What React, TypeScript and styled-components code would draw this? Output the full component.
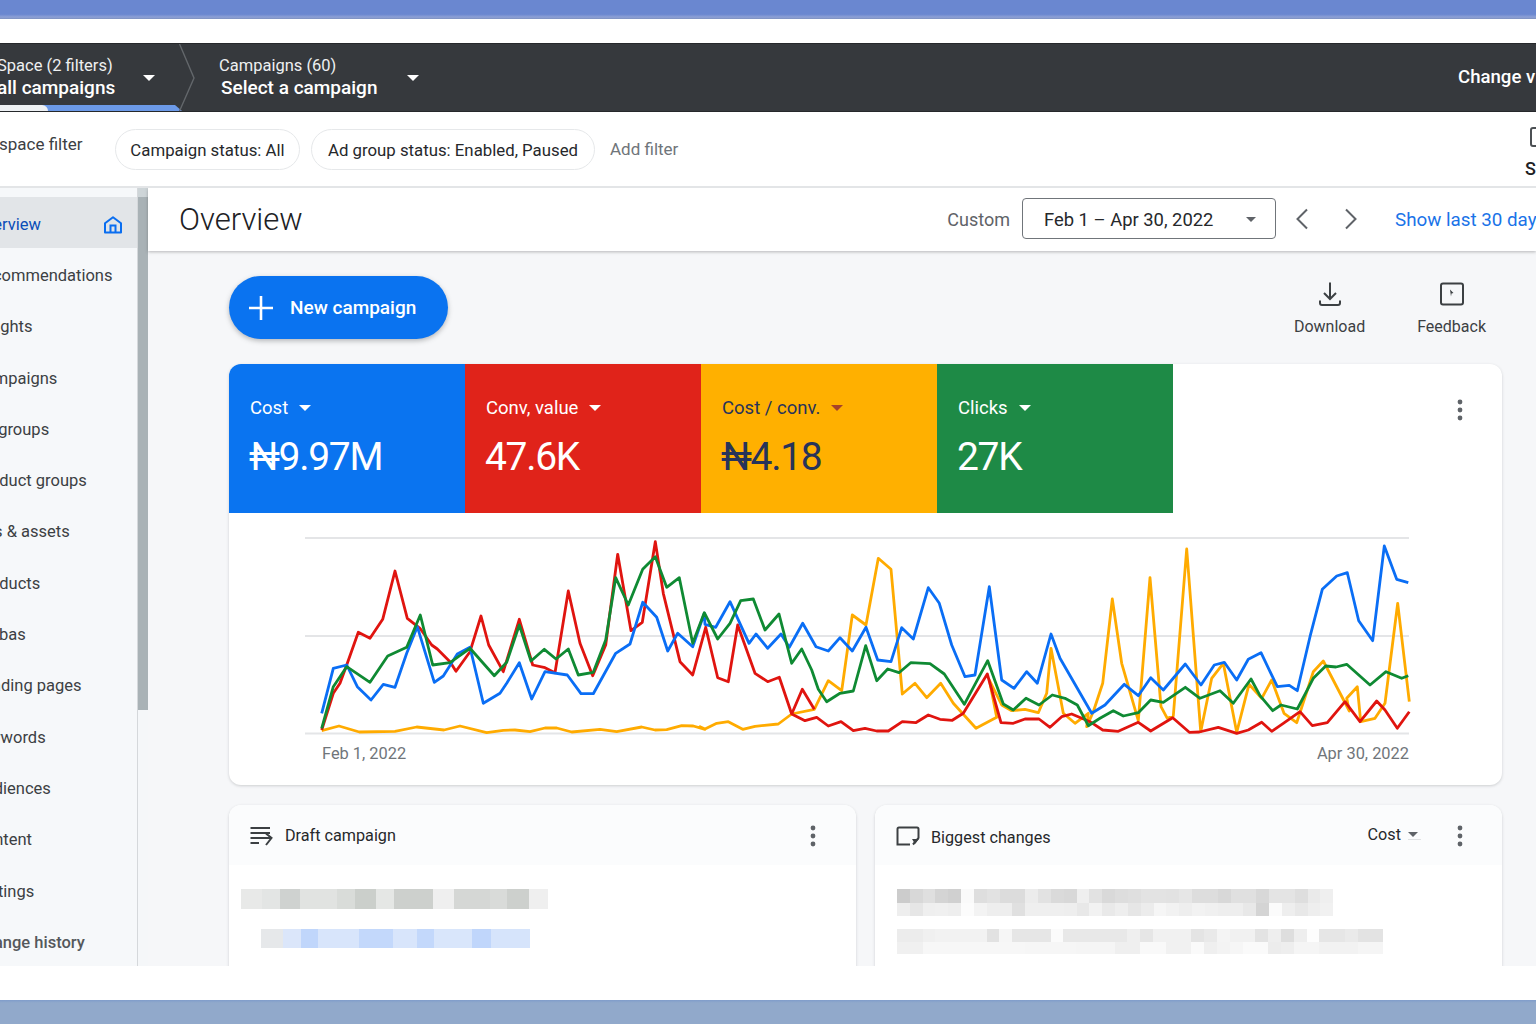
import React from 'react';
import styled, { createGlobalStyle } from 'styled-components';

const Global = createGlobalStyle`
  html, body { margin: 0; padding: 0; background: #fff; overflow: hidden; }
  * { box-sizing: border-box; }
  body { font-family: Roboto, "Noto Sans", "Liberation Sans", sans-serif; color: #202124; }
`;

const Page = styled.div`
  width: 1536px; height: 1024px; overflow: hidden; display: flex; flex-direction: column; background: #fff;
`;
const TopBand = styled.div`
  height: 19px; flex: none; margin-bottom: 24px;
  background: linear-gradient(#6a87d0 0, #6a87d0 75%, #8ea1d6 90%, #7d90bf 100%);
`;
const Stage = styled.div`
  width: 1566px; margin-left: -30px; height: 923px; flex: none; display: flex; flex-direction: column; overflow: hidden;
`;
const BottomBand = styled.div`
  margin-top: 34px; height: 24px; flex: none;
  background: linear-gradient(#7f9ccb 0, #91a9cb 12%, #91a9cb 100%);
`;

const DarkBar = styled.div`
  height: 69px; flex: none; display: flex; align-items: center; color: #fff;
  background: #36393d; border-top: 1px solid #26282b; border-bottom: 1px solid #26282b;
`;
const Crumb = styled.div<{ $w: number; $pad: number }>`
  position: relative; height: 100%; width: ${p => p.$w}px; padding-left: ${p => p.$pad}px; flex: none;
  display: flex; align-items: center;
`;
const CrumbText = styled.div<{ $w: number }>`
  width: ${p => p.$w}px; display: flex; flex-direction: column; flex: none; padding-bottom: 2px;
`;
const CrumbSmall = styled.span`
  font-size: 16.5px; line-height: 22px; color: #eef0f1; white-space: nowrap;
`;
const CrumbBold = styled.span<{ $indent?: number }>`
  font-size: 19px; line-height: 22px; font-weight: 500; white-space: nowrap; padding-left: ${p => p.$indent ?? 0}px;
`;
const Caret = styled.span<{ $c?: string; $s?: number }>`
  display: inline-block; flex: none; width: 0; height: 0;
  border-left: ${p => p.$s ?? 6.5}px solid transparent; border-right: ${p => p.$s ?? 6.5}px solid transparent;
  border-top: ${p => p.$s ?? 6.5}px solid ${p => p.$c ?? '#fff'};
`;
const CrumbChevron = styled.svg`
  position: absolute; right: -15px; top: 0; width: 16px; height: 67px;
`;
const ActiveTab = styled.div`
  position: absolute; left: 0; bottom: 0; width: 212px; height: 6px; background: #6c9ae8;
  clip-path: polygon(0 0, 205px 0, 212px 100%, 0 100%);
`;
const ActiveTabLight = styled.div`
  position: absolute; left: 0; bottom: 0; width: 78px; height: 6px; background: #eef1f4; border-top-right-radius: 6px;
`;
const ChangeView = styled.div`
  margin-left: auto; width: 78px; flex: none; white-space: nowrap; font-size: 18.6px; font-weight: 500; margin-top: -1px;
`;

const FilterBar = styled.div`
  height: 76px; flex: none; background: #fff; border-bottom: 2px solid #e3e5e7;
  display: flex; align-items: flex-start; padding-top: 17px;
`;
const FilterLabel = styled.div`
  width: 145px; flex: none; font-size: 17px; line-height: 30px; color: #3c4043; white-space: nowrap;
  padding-left: 29px; margin-top: 0;
`;
const Chip = styled.div<{ $w: number }>`
  width: ${p => p.$w}px; height: 41px; flex: none; border: 1.5px solid #e6e8ea; border-radius: 21px;
  display: flex; align-items: center; justify-content: center; font-size: 16.8px; white-space: nowrap; margin-right: 11px;
  color: #26282b;
`;
const AddFilter = styled.div`
  font-size: 17px; line-height: 41px; color: #70757a; margin-left: 4px; white-space: nowrap;
`;
const SideTool = styled.div`
  margin-left: auto; width: 11px; flex: none; display: flex; flex-direction: column; align-items: flex-start;
  margin-top: -2px;
`;
const SideToolBox = styled.div`
  width: 18px; height: 20px; margin-left: 5px; border: 2px solid #4c5054; border-radius: 3px; flex: none;
`;
const SideToolLabel = styled.div`
  font-size: 18px; line-height: 22px; margin-top: 11px; white-space: nowrap; font-weight: 500;
`;

const Body = styled.div`
  flex: 1; min-height: 0; display: flex; overflow: hidden;
`;
const Sidebar = styled.nav`
  width: 168px; flex: none; background: #f6f8fa; border-right: 1px solid #d5d8db; padding-top: 9px;
  display: flex; flex-direction: column;
`;
const NavItem = styled.div<{ $active?: boolean; $pad?: number; $strong?: boolean }>`
  height: 51.3px; flex: none; display: flex; align-items: center; padding-left: ${p => p.$pad ?? 4}px; padding-right: 14px;
  font-size: 16.5px; white-space: nowrap; justify-content: space-between;
  padding-top: ${p => (p.$active ? 4 : 3)}px;
  font-weight: ${p => (p.$strong ? 500 : 400)};
  background: ${p => (p.$active ? '#e2e5e8' : 'transparent')};
  color: ${p => (p.$active ? '#0b4db8' : p.$strong ? '#55585c' : '#3c4043')};
`;
const ScrollTrack = styled.div`
  width: 10px; flex: none; background: #f5f7f9; display: flex; flex-direction: column;
`;
const ScrollThumb = styled.div`
  height: 522px; flex: none; background: linear-gradient(#ced5d8 0, #ced5d8 9px, #a9b2b6 9px, #a9b2b6 100%);
`;
const Main = styled.main`
  flex: 1; min-width: 0; background: #f6f7f9; display: flex; flex-direction: column;
`;
const HeaderBar = styled.header`
  height: 63px; flex: none; background: #fff; display: flex; align-items: center; padding-left: 31px;
  box-shadow: 0 1px 3px rgba(60, 64, 67, 0.35); position: relative;
`;
const Title = styled.h1`
  flex: 1; margin: 0; font-size: 31px; font-weight: 300; color: #202124;
`;
const RangeLabel = styled.span`
  font-size: 18px; color: #5f6368; margin-right: 12px; flex: none;
`;
const RangeBox = styled.div`
  width: 254px; height: 41px; flex: none; border: 1.5px solid #70757a; border-radius: 4px; position: relative; top: -1px;
  display: flex; align-items: center; justify-content: space-between; padding: 1px 19px 0 21px; font-size: 18.4px; color: #26282b;
`;
const ArrowBtn = styled.svg`
  width: 24px; height: 24px; flex: none; margin-left: 14px; margin-right: 11px; position: relative; top: -1px;
`;
const ShowLast = styled.div`
  width: 141px; flex: none; white-space: nowrap; font-size: 18.8px; color: #1a73e8; margin-left: 21px;
`;
const Content = styled.div`
  padding: 0 34px 0 81px; display: flex; flex-direction: column;
`;
const Toolbar = styled.div`
  height: 113px; flex: none; padding-top: 25px; display: flex; justify-content: space-between; align-items: flex-start;
`;
const NewButton = styled.div`
  width: 219px; height: 63px; border-radius: 32px; background: #0a73f0; color: #fff; flex: none;
  display: flex; align-items: center; padding-left: 19px; gap: 16px; font-size: 19px; font-weight: 500;
  box-shadow: 0 2px 5px rgba(60, 64, 67, 0.35);
`;
const Tools = styled.div`
  display: flex; gap: 52px; padding-right: 16px; padding-top: 5px;
`;
const Tool = styled.div`
  display: flex; flex-direction: column; align-items: center; font-size: 16px; color: #3c4043; gap: 10px;
`;
const Card = styled.section`
  height: 421px; flex: none; background: #fff; border-radius: 12px; overflow: hidden;
  box-shadow: 0 1px 3px rgba(60, 64, 67, 0.22); display: flex; flex-direction: column;
`;
const Scorecards = styled.div`
  height: 149px; flex: none; display: flex;
`;
const Tile = styled.div<{ $bg: string; $fg: string }>`
  width: 236px; flex: none; background: ${p => p.$bg}; color: ${p => p.$fg}; padding: 33px 0 0 21px;
`;
const TileHead = styled.div`
  display: flex; align-items: center; gap: 11px; font-size: 18.5px; line-height: 22px;
`;
const TileValue = styled.div`
  font-size: 39px; line-height: 48px; letter-spacing: -1.3px; margin-top: 14px; margin-left: -1px;
`;
const Kebab = styled.svg`
  width: 6px; height: 22px; flex: none;
`;
const CardMenu = styled.div`
  flex: 1; display: flex; justify-content: flex-end; padding: 35px 39px 0 0;
`;
const ChartSvg = styled.svg`
  display: block; width: 1273px; height: 232px; flex: none;
`;
const DateRow = styled.div`
  display: flex; justify-content: space-between; padding: 0 93px 0 93px; font-size: 16.4px; line-height: 18px; color: #70757a;
`;
const LowerGrid = styled.div`
  margin-top: 20px; display: grid; grid-template-columns: 627px 627px; gap: 19px;
`;
const LowerCard = styled.section`
  height: 220px; background: #fff; border-radius: 12px; overflow: hidden; box-shadow: 0 1px 3px rgba(60, 64, 67, 0.22);
`;
const LowerHead = styled.div<{ $right: number }>`
  height: 60px; background: #fbfcfd; display: flex; align-items: center; padding: 2px ${p => p.$right}px 0 21px; margin-bottom: 24px;
  font-size: 16.2px; color: #26282b;
`;
const LowerTitle = styled.span<{ $gap: number }>`
  margin-left: ${p => p.$gap}px; flex: 1; position: relative; top: ${p => (p.$gap > 11 ? -1 : 1)}px;
`;
const CostSelect = styled.div`
  display: flex; align-items: center; gap: 7px; margin-right: 36px; padding-bottom: 2px; position: relative; top: -1px;
`;
const CostCaret = styled.span`
  display: inline-flex; padding: 4px 3px 2px 0; border-bottom: 1px solid #dfe1e3;
`;
const MosaicRow = styled.div<{ $w: number; $h: number; $left: number; $mb?: number }>`
  display: flex; width: ${p => p.$w}px; height: ${p => p.$h}px; margin-left: ${p => p.$left}px; margin-bottom: ${p => p.$mb ?? 0}px;
`;
const MosaicCell = styled.span<{ $c: string; $flex: number }>`
  flex: ${p => p.$flex} 0 0; background: ${p => p.$c};
`;

const line = (segments: [number, number[]][]) =>
  segments
    .flatMap(([ox, a]) => {
      const out: string[] = [];
      for (let i = 0; i < a.length; i += 2) {
        out.push(`${(ox + a[i] / 3).toFixed(1)},${(530 + a[i + 1] / 3).toFixed(1)}`);
      }
      return out;
    })
    .join(' ');

const yellow = line([
  [220, [305,602,357,588,418,606,525,604,590,591,672,600,720,588,800,608,850,601,885,600,930,605,975,594,1010,594,1055,606,1140,598,1190,605,1265,591,1305,600,1340,599,1385,587,1420,588,1455,598]],
  [700, [0,590,15,597,50,580,85,575,128,598,165,589,235,582,275,552,343,538,385,452,425,482,457,255,498,285,535,85,573,118,607,492,645,460,680,503,722,460,760,520,828,595,890,562,868,450,905,525,935,542,975,538,1015,548,1040,490,1053,355,1090,550,1125,580,1165,550]],
  [1080, [20,590,40,545,68,460,97,207,125,400,175,572,210,143,243,530,262,565,280,558,320,57,362,605,395,445,430,400,470,607,507,463,545,505,575,450,612,550,650,578,700,425,730,393,808,543,800,505,832,470,842,575,885,565,915,520,953,220,988,515]],
]);
const red = line([
  [220, [305,600,340,490,360,460,380,405,415,307,450,325,488,268,525,123,562,265,600,295,635,345,652,357,690,395,708,424,750,365,783,258,806,345,850,425,898,268,938,405,975,413,1005,428,1045,183,1080,340,1118,437,1157,345,1193,73,1233,302,1267,277,1306,35,1330,190,1380,395,1418,435,1457,292,1493,443]],
  [700, [85,455,113,285,165,430,203,455,238,442,275,552,315,572,350,562,385,588,423,575,460,602,495,595,530,603,565,603,607,575,647,578,685,555,720,568,757,571,790,550,862,432,903,578,940,580,975,567,1017,567,1050,592,1085,560,1115,552]],
  [1080, [30,575,68,600,115,604,175,577,212,603,278,563,328,607,358,606,415,592,470,610,505,600,545,577,575,604,610,580,660,545,697,587,742,578,795,515,840,575,890,513,915,540,952,595,988,545]],
]);
const redSpur = line([[700, [275,552,307,478,343,538]]]);
const blue = line([
  [220, [305,550,340,415,380,405,412,470,453,510,490,463,525,472,560,370,592,290,643,457,670,438,712,372,750,352,790,520,840,490,860,460,898,398,935,507,975,425,1042,435,1083,491,1120,491,1187,370,1230,342,1268,217,1310,262,1343,363,1373,310,1418,350,1453,250,1455,283,1487,292]],
  [700, [90,215,147,340,168,312,203,355,243,312,268,352,308,280,348,350,385,363,420,323,457,363,498,292,533,390,573,395,605,293,640,327,685,173,718,220,755,345,795,440,825,435,868,170,905,450,942,475,980,425,1012,460,1053,312,1080,385,1175,550]],
  [1080, [75,525,133,463,175,497,212,443,250,480,316,402,363,465,403,405,433,397,470,450,505,388,543,368,592,470,628,466,652,482,690,320,727,178,770,138,802,128,836,272,878,332,913,48,950,148,985,158]],
]);
const green = line([
  [220, [305,595,340,470,380,410,450,457,503,378,560,352,601,255,638,405,690,398,750,355,823,437,860,397,898,285,933,393,973,358,1008,387,1045,357,1075,435,1120,427,1157,330,1187,143,1225,225,1268,118,1306,80,1340,172,1378,143,1418,340,1453,248]],
  [700, [53,327,90,280,122,212,160,207,195,300,237,252,275,400,305,357,335,420,355,478,380,515,420,490,460,483,497,347,530,452,563,417,597,428,632,398,690,401,733,432,793,523,863,392,910,522,940,540,978,505,1017,525,1057,495,1095,505,1132,525,1165,587]],
  [1080, [60,565,100,542,130,558,175,548,212,510,250,517,316,472,360,505,420,482,460,520,513,447,540,497,578,542,603,525,652,537,700,445,737,408,768,411,800,403,870,465,918,425,965,445,985,437]],
]);

const NAV: { label: string; pad?: number; strong?: boolean }[] = [
  { label: 'Recommendations' },
  { label: 'Insights' },
  { label: 'Campaigns' },
  { label: 'Ad groups' },
  { label: 'Product groups' },
  { label: 'Ads & assets' },
  { label: 'Products' },
  { label: 'bas', pad: 29 },
  { label: 'Landing pages' },
  { label: 'Keywords' },
  { label: 'Audiences' },
  { label: 'Content' },
  { label: 'Settings' },
  { label: 'Change history', strong: true },
];

const draftA: [string, number][] = [['#e8e9e8',50],['#e3e5e4',42],['#cfd2d0',48],['#e1e3e1',88],['#d9dcd9',44],['#cbcfcb',48],['#e5e7e5',43],['#cdd0cd',94],['#efefef',50],['#d5d7d5',86],['#d9dbd9',40],['#cdd0cd',52],['#efefef',45]];
const draftB: [string, number][] = [['#e6e8ea',53],['#dbe6fa',42],['#c0d6fb',40],['#d8e5fb',98],['#c3d8fb',80],['#d8e5fb',57],['#c3d8fb',40],['#d9e6fb',91],['#c0d6fb',45],['#d6e4fb',92]];

const grey = (list: string) => list.split(' ').map((g): [string, number] => [`#${g}${g}${g}`, 1]);
const bigA = grey('cc d8 df d4 d0 fa de e2 dc dc ec e2 da d8 ef e2 d9 dd df e3 e3 e2 e6 dd dd d8 e0 e0 d8 e4 e4 de ea ef');
const bigB = grey('ee e6 ef f0 ee fc f3 ee ee e0 ef ef ef ee e8 f2 e9 ee e6 ec f6 f2 ee f2 f0 ee ee e8 d4 fb ee e8 ee f1');
const bigC = grey('ec ec f0 f2 f2 f2 f2 e2 f6 e6 e6 e6 fb e8 e8 e8 e8 e8 ef e6 f1 f1 f1 e4 e9 f4 f1 f1 e3 ee de ee fd e6 e6 ea e3 e3');
const bigD = grey('f0 f0 f7 f7 f7 f7 f7 f7 f7 f7 f6 f6 f6 f6 f5 f5 f5 ef ef f9 f9 f1 f1 fa ef f3 f6 fa fa ec ee f5 f5 f2 f2 f2 f5 f5');

const Mosaic: React.FC<{ cells: [string, number][]; w: number; h: number; left: number; mb?: number }> = ({ cells, w, h, left, mb }) => (
  <MosaicRow $w={w} $h={h} $left={left} $mb={mb}>
    {cells.map(([c, f], i) => (
      <MosaicCell key={i} $c={c} $flex={f} />
    ))}
  </MosaicRow>
);

const KebabIcon = () => (
  <Kebab viewBox="0 0 6 22">
    <circle cx="3" cy="3" r="2.4" fill="#5f6368" />
    <circle cx="3" cy="11" r="2.4" fill="#5f6368" />
    <circle cx="3" cy="19" r="2.4" fill="#5f6368" />
  </Kebab>
);

const Tiles = [
  { bg: '#0a74f0', fg: '#fff', label: 'Cost', value: '₦9.97M', caret: '#fff' },
  { bg: '#e0231a', fg: '#fff', label: 'Conv, value', value: '47.6K', caret: '#fff' },
  { bg: '#ffb000', fg: '#27335a', label: 'Cost / conv.', value: '₦4.18', caret: '#a5432a' },
  { bg: '#1e8a46', fg: '#fff', label: 'Clicks', value: '27K', caret: '#fff' },
];

export default function App() {
  return (
    <Page>
      <Global />
      <TopBand />
      <Stage>
        <DarkBar>
          <Crumb $w={210} $pad={27}>
            <CrumbText $w={146}>
              <CrumbSmall>Space (2 filters)</CrumbSmall>
              <CrumbBold>all campaigns</CrumbBold>
            </CrumbText>
            <Caret />
            <ActiveTab />
            <ActiveTabLight />
            <CrumbChevron viewBox="0 0 16 67">
              <path d="M0.5 0 L15 34 L0.5 67" fill="none" stroke="#63676b" strokeWidth="1.4" />
            </CrumbChevron>
          </Crumb>
          <Crumb $w={240} $pad={39}>
            <CrumbText $w={188}>
              <CrumbSmall>Campaigns (60)</CrumbSmall>
              <CrumbBold $indent={2}>Select a campaign</CrumbBold>
            </CrumbText>
            <Caret />
          </Crumb>
          <ChangeView>Change view</ChangeView>
        </DarkBar>
        <FilterBar>
          <FilterLabel>space filter</FilterLabel>
          <Chip $w={185}>Campaign status: All</Chip>
          <Chip $w={284}>Ad group status: Enabled, Paused</Chip>
          <AddFilter>Add filter</AddFilter>
          <SideTool>
            <SideToolBox />
            <SideToolLabel>S</SideToolLabel>
          </SideTool>
        </FilterBar>
        <Body>
          <Sidebar>
            <NavItem $active>
              Overview
              <svg width="20" height="20" viewBox="0 0 20 20" fill="none">
                <path d="M2 8.2 L10 2.2 L18 8.2 V17.5 H2 Z" stroke="#0a6ef0" strokeWidth="2" strokeLinejoin="round" />
                <path d="M7.5 17.5 V10.5 H12.5 V17.5" stroke="#0a6ef0" strokeWidth="2" />
              </svg>
            </NavItem>
            {NAV.map(n => (
              <NavItem key={n.label} $pad={n.pad} $strong={n.strong}>
                {n.label}
              </NavItem>
            ))}
          </Sidebar>
          <ScrollTrack>
            <ScrollThumb />
          </ScrollTrack>
          <Main>
            <HeaderBar>
              <Title>Overview</Title>
              <RangeLabel>Custom</RangeLabel>
              <RangeBox>
                Feb 1 – Apr 30, 2022
                <Caret $c="#5f6368" $s={5} />
              </RangeBox>
              <ArrowBtn viewBox="0 0 24 24" fill="none">
                <path d="M17 2.5 L7.5 12 L17 21.5" stroke="#5f6368" strokeWidth="2" />
              </ArrowBtn>
              <ArrowBtn viewBox="0 0 24 24" fill="none">
                <path d="M7 2.5 L16.5 12 L7 21.5" stroke="#5f6368" strokeWidth="2" />
              </ArrowBtn>
              <ShowLast>Show last 30 days</ShowLast>
            </HeaderBar>
            <Content>
              <Toolbar>
                <NewButton>
                  <svg width="26" height="26" viewBox="0 0 26 26">
                    <path d="M13 1 V25 M1 13 H25" stroke="#fff" strokeWidth="2.6" />
                  </svg>
                  New campaign
                </NewButton>
                <Tools>
                  <Tool>
                    <svg width="26" height="26" viewBox="0 0 26 26" fill="none">
                      <path d="M13 1.5 V18 M7 12 L13 18 L19 12" stroke="#3c4043" strokeWidth="2" />
                      <path d="M3 19.5 V22 Q3 24 5 24 H21 Q23 24 23 22 V19.5" stroke="#3c4043" strokeWidth="2" />
                    </svg>
                    Download
                  </Tool>
                  <Tool>
                    <svg width="26" height="26" viewBox="0 0 26 26" fill="none">
                      <rect x="2" y="2.5" width="22" height="21" rx="2" stroke="#3c4043" strokeWidth="2" />
                      <path d="M11 8.5 L14.5 12 L12.5 12.5 L12 15.5 Z" fill="#3c4043" />
                    </svg>
                    Feedback
                  </Tool>
                </Tools>
              </Toolbar>
              <Card>
                <Scorecards>
                  {Tiles.map(t => (
                    <Tile key={t.label} $bg={t.bg} $fg={t.fg}>
                      <TileHead>
                        {t.label}
                        <Caret $c={t.caret} />
                      </TileHead>
                      <TileValue>{t.value}</TileValue>
                    </Tile>
                  ))}
                  <CardMenu>
                    <KebabIcon />
                  </CardMenu>
                </Scorecards>
                <ChartSvg viewBox="229 513 1273 232" fill="none">
                  <g stroke="#e4e5e7" strokeWidth="2">
                    <path d="M305 538 H1409" />
                    <path d="M305 636 H1409" />
                    <path d="M305 733.5 H1409" />
                  </g>
                  <g strokeWidth="2.8" strokeLinejoin="round">
                    <polyline points={yellow} stroke="#ffab00" />
                    <polyline points={redSpur} stroke="#e0140f" />
                    <polyline points={red} stroke="#e0140f" />
                    <polyline points={blue} stroke="#0a6ef5" />
                    <polyline points={green} stroke="#0f8a33" />
                  </g>
                </ChartSvg>
                <DateRow>
                  <span>Feb 1, 2022</span>
                  <span>Apr 30, 2022</span>
                </DateRow>
              </Card>
              <LowerGrid>
                <LowerCard>
                  <LowerHead $right={40}>
                    <svg width="23" height="22" viewBox="0 0 23 22" fill="none">
                      <path d="M0.5 3 H20 M0.5 8 H20 M0.5 13 H21 M0.5 18 H9 M16 8.5 L21.5 13 L16 20" stroke="#3c4043" strokeWidth="2" />
                    </svg>
                    <LowerTitle $gap={12}>Draft campaign</LowerTitle>
                    <KebabIcon />
                  </LowerHead>
                  <Mosaic cells={draftA} w={307} h={20} left={12} mb={20} />
                  <Mosaic cells={draftB} w={269} h={19} left={32} />
                </LowerCard>
                <LowerCard>
                  <LowerHead $right={39}>
                    <svg width="24" height="20" viewBox="0 0 24 20" fill="none">
                      <path d="M14 18.5 H1.5 V3 Q1.5 1.5 3 1.5 H21 Q22.5 1.5 22.5 3 V12 L17 18.5" stroke="#3c4043" strokeWidth="2" />
                      <path d="M16 13 H23 L19 18 Z" fill="#3c4043" />
                    </svg>
                    <LowerTitle $gap={11}>Biggest changes</LowerTitle>
                    <CostSelect>
                      Cost
                      <CostCaret>
                        <Caret $c="#5f6368" $s={5} />
                      </CostCaret>
                    </CostSelect>
                    <KebabIcon />
                  </LowerHead>
                  <Mosaic cells={bigA} w={436} h={14} left={22} />
                  <Mosaic cells={bigB} w={436} h={13} left={22} mb={13} />
                  <Mosaic cells={bigC} w={486} h={13} left={22} />
                  <Mosaic cells={bigD} w={486} h={12} left={22} />
                </LowerCard>
              </LowerGrid>
            </Content>
          </Main>
        </Body>
      </Stage>
      <BottomBand />
    </Page>
  );
}
